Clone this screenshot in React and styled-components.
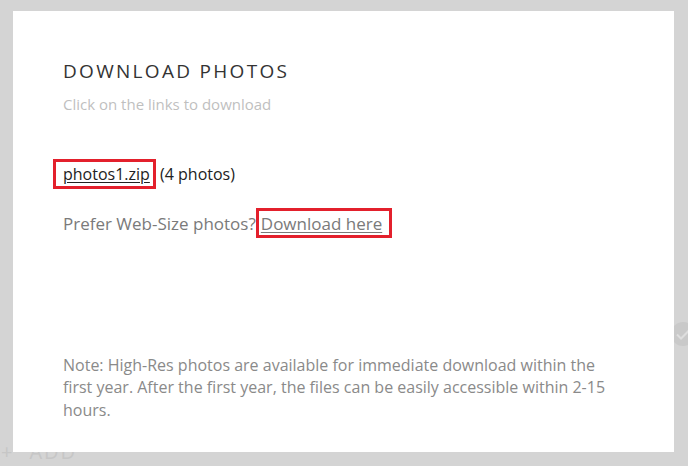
import React from "react";
import styled, { createGlobalStyle } from "styled-components";

const GlobalStyle = createGlobalStyle`
  html, body {
    margin: 0;
    padding: 0;
    background: #d4d4d4;
  }
  body {
    font-family: "Open Sans", "Noto Sans", sans-serif;
    overflow: hidden;
  }
`;

const Backdrop = styled.div`
  width: 688px;
  height: 466px;
  background: #d4d4d4;
  padding: 11px 14px 0 13px;
  box-sizing: border-box;
  position: relative;
  overflow: hidden;
`;

const Modal = styled.div`
  position: relative;
  z-index: 1;
  background: #ffffff;
  height: 441px;
  box-sizing: border-box;
  padding: 46px 50px 0 50px;
  display: flex;
  flex-direction: column;
`;

const Title = styled.h2`
  margin: 0;
  font-weight: 400;
  font-size: 19px;
  line-height: 28px;
  letter-spacing: 2.3px;
  color: #333333;
`;

const Subtitle = styled.p`
  margin: 8px 0 0;
  font-size: 15px;
  line-height: 22px;
  color: #bfbfbf;
`;

const Line = styled.p`
  margin: ${(p) => p.$top}px 0 0;
  font-size: ${(p) => p.$size}px;
  line-height: 24px;
  color: ${(p) => p.$color};
`;

const Marked = styled.span`
  display: inline-block;
  border: 3px solid #e3202c;
  padding: 1px ${(p) => p.$right}px 0 ${(p) => p.$left}px;
  margin-left: ${(p) => p.$shift}px;
  line-height: 23px;
`;

const Link = styled.a`
  color: ${(p) => p.$color};
  text-decoration: underline;
  text-underline-offset: 2px;
  text-decoration-thickness: 1px;
`;

const Note = styled.p`
  margin: auto 0 0;
  padding-bottom: 31px;
  font-size: 16px;
  line-height: 22.5px;
  color: #8a8a8a;
  max-width: 550px;
`;

const Behind = styled.div`
  position: relative;
  z-index: 0;
  margin-top: -10px;
  margin-left: -12px;
  display: flex;
  align-items: center;
  gap: 15px;
  font-size: 20px;
  line-height: 20px;
  letter-spacing: 2px;
  color: #c6c6c6;
`;

const CheckMark = styled.svg`
  position: absolute;
  right: -8px;
  top: 321px;
  z-index: 0;
`;

export default function App() {
  return (
    <>
      <GlobalStyle />
      <Backdrop>
        <CheckMark width="26" height="26" viewBox="0 0 26 26">
          <circle cx="13" cy="13" r="12" fill="#c9c9c9" />
          <path d="M7 13.5l4 4 8-8" fill="none" stroke="#dedede" strokeWidth="2" />
        </CheckMark>
        <Modal>
          <Title>DOWNLOAD PHOTOS</Title>
          <Subtitle>Click on the links to download</Subtitle>
          <Line $top={44} $size={16} $color="#222222">
            <Marked $left={7} $right={3} $shift={-10}>
              <Link $color="#222222" href="#">photos1.zip</Link>
            </Marked>{" "}
            (4 photos)
          </Line>
          <Line $top={19} $size={17} $color="#7a7a7a">
            Prefer Web-Size photos?
            <Marked $left={2} $right={7} $shift={0}>
              <Link $color="#7a7a7a" href="#">Download here</Link>
            </Marked>
          </Line>
          <Note>
            Note: High-Res photos are available for immediate download within the
            first year. After the first year, the files can be easily accessible
            within 2-15 hours.
          </Note>
        </Modal>
        <Behind>
          <span>+</span>
          <span>ADD</span>
        </Behind>
      </Backdrop>
    </>
  );
}
